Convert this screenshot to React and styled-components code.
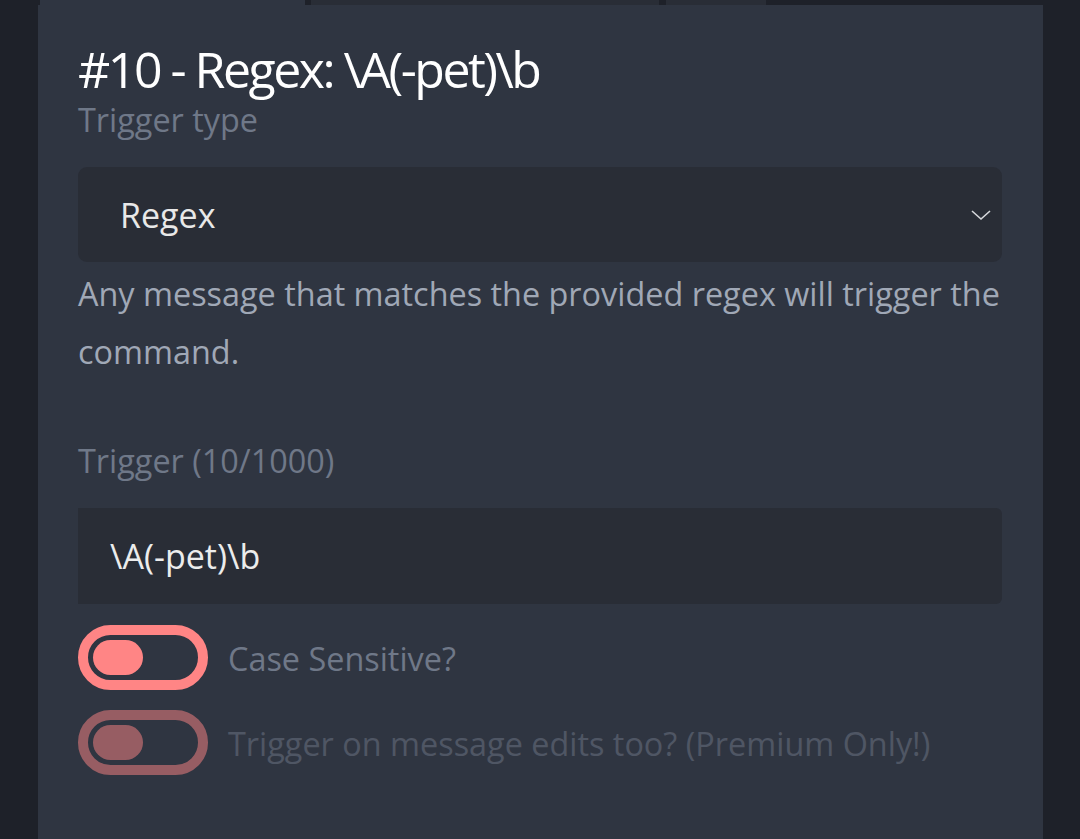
import React, { useState } from 'react';
import styled, { createGlobalStyle } from 'styled-components';

const GlobalStyle = createGlobalStyle`
  html, body {
    margin: 0;
    padding: 0;
    background: #1e2129;
  }
  body {
    font-family: "Open Sans", "Noto Sans", sans-serif;
    overflow: hidden;
  }
`

const Page = styled.div`
  width: 1080px;
  height: 839px;
  overflow: hidden;
`

const TabStrip = styled.div`
  display: flex;
  height: 5px;
  padding-left: 40px;
`

const Tab = styled.div`
  width: ${p => p.w}px;
  margin-right: ${p => p.gap || 0}px;
  background: ${p => (p.active ? '#2f3541' : '#292d36')};
`

const Card = styled.div`
  margin: 0 37px 0 38px;
  min-height: 834px;
  background: #2f3541;
  padding: 34px 41px 0 40px;
  box-sizing: border-box;
  display: flex;
  flex-direction: column;
`

const Title = styled.h1`
  margin: 0;
  font-size: 50px;
  line-height: 60px;
  font-weight: 400;
  letter-spacing: -2.5px;
  color: #ffffff;
`

const Label = styled.div`
  font-size: 32.4px;
  line-height: 36px;
  color: #6f7888;
  margin-top: ${p => p.mt || 0}px;
`

const Select = styled.div`
  margin-top: 30px;
  height: 95px;
  border-radius: 9px;
  background: #292d36;
  display: flex;
  align-items: center;
  justify-content: space-between;
  padding: 0 10px 0 42px;
  font-size: 34px;
  color: #e8e8e8;
`

const Chevron = styled.svg`
  width: 22px;
  height: 14px;
`

const Description = styled.p`
  margin: 2px 0 0;
  font-size: 32.4px;
  line-height: 58px;
  color: #a0a8b6;
`

const Input = styled.div`
  margin-top: 30px;
  height: 96px;
  border-radius: 0 6px 6px 0;
  background: #292d36;
  display: flex;
  align-items: center;
  padding-left: 32px;
  font-size: 34px;
  color: #ececec;
`

const ToggleRow = styled.label`
  display: flex;
  align-items: center;
  gap: 20px;
  margin-top: ${p => p.mt}px;
  opacity: ${p => (p.disabled ? 0.5 : 1)};
  cursor: ${p => (p.disabled ? 'default' : 'pointer')};
`

const Track = styled.div`
  width: 130px;
  height: 65px;
  box-sizing: border-box;
  border: 10px solid #ff8585;
  border-radius: 33px;
  padding: 5px;
  display: flex;
  justify-content: ${p => (p.on ? 'flex-end' : 'flex-start')};
`

const Knob = styled.div`
  width: 50px;
  height: 35px;
  border-radius: 18px;
  background: #ff8585;
`

const ToggleText = styled.span`
  font-size: 32.4px;
  line-height: 40px;
  color: #6f7888;
`

function Toggle({ label, disabled, mt }) {
  const [on, setOn] = useState(false)
  return (
    <ToggleRow mt={mt} disabled={disabled} onClick={() => !disabled && setOn(!on)}>
      <Track on={on}>
        <Knob />
      </Track>
      <ToggleText>{label}</ToggleText>
    </ToggleRow>
  )
}

export default function App() {
  return (
    <Page>
      <GlobalStyle />
      <TabStrip>
        <Tab w={265} gap={6} active />
        <Tab w={348} gap={7} />
        <Tab w={100} />
      </TabStrip>
      <Card>
        <Title>#10 - Regex: \A(-pet)\b</Title>
        <Label mt={2}>Trigger type</Label>
        <Select>
          <span>Regex</span>
          <Chevron viewBox="0 0 22 14" fill="none">
            <polyline points="2,3 11,11 20,3" stroke="#d6d8dc" strokeWidth="1.6" />
          </Chevron>
        </Select>
        <Description>
          Any message that matches the provided regex will trigger the command.
        </Description>
        <Label mt={62}>Trigger (10/1000)</Label>
        <Input>\A(-pet)\b</Input>
        <Toggle label="Case Sensitive?" mt={21} />
        <Toggle label="Trigger on message edits too? (Premium Only!)" mt={20} disabled />
      </Card>
    </Page>
  );
}
